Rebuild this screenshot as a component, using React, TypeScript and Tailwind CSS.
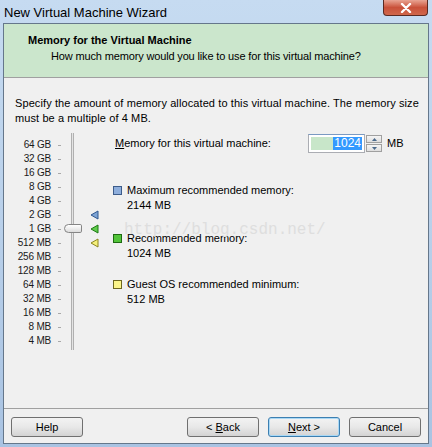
import React from "react";

const sizes = [
  "64 GB",
  "32 GB",
  "16 GB",
  "8 GB",
  "4 GB",
  "2 GB",
  "1 GB",
  "512 MB",
  "256 MB",
  "128 MB",
  "64 MB",
  "32 MB",
  "16 MB",
  "8 MB",
  "4 MB",
];

const Arrow = ({ fill, stroke }: { fill: string; stroke: string }) => (
  <svg width="9" height="10" viewBox="0 0 9 10">
    <path d="M8 1 L1 5 L8 9 Z" fill={fill} stroke={stroke} strokeWidth="1" />
  </svg>
);

const Swatch = ({ color, border }: { color: string; border: string }) => (
  <span
    className="inline-block w-[9px] h-[9px] border mt-[3px] shrink-0"
    style={{ backgroundColor: color, borderColor: border }}
  />
);

const WinButton = ({
  children,
  focused,
}: {
  children: React.ReactNode;
  focused?: boolean;
}) => (
  <button
    className={`w-[72px] h-[20px] rounded-[3px] border text-[11px] text-black bg-gradient-to-b from-[#f3f3f3] via-[#e8e8e8] to-[#d3d3d3] ${
      focused ? "border-[#3c7fb1] shadow-[inset_0_0_0_1px_#a9d8f5]" : "border-[#707070]"
    }`}
  >
    {children}
  </button>
);

export default function App() {
  return (
    <div
      className="w-[432px] h-[447px] flex flex-col bg-gradient-to-b from-[#c6dbf1] via-[#b9d0ea] to-[#a9c3e2]"
      style={{ fontFamily: '"Liberation Sans", Arial, sans-serif' }}
    >
      {/* title bar */}
      <div className="h-[23px] flex items-start justify-between shrink-0">
        <span className="text-[13px] text-black pl-[4px] pt-[5px] leading-[16px]">
          New Virtual Machine Wizard
        </span>
        <div className="mr-[4px] w-[45px] h-[16px] rounded-b-[4px] border border-t-0 border-[#5a2a22] bg-gradient-to-b from-[#e8a493] via-[#c9513a] to-[#d0674b] flex items-center justify-center">
          <svg width="12" height="10" viewBox="0 0 12 10">
            <path
              d="M2 1 L10 9 M10 1 L2 9"
              stroke="#ffffff"
              strokeWidth="2.4"
              strokeLinecap="round"
            />
          </svg>
        </div>
      </div>

      {/* client */}
      <div className="flex-1 ml-[3px] mr-[3px] mb-[3px] border border-[#65778b] bg-[#f0f0f0] flex flex-col">
        {/* header */}
        <div className="h-[54px] bg-[#cbe6cc] border-b border-[#a0a0a0] shrink-0 pt-[9px]">
          <div className="pl-[24px] text-[11px] font-bold text-black leading-[14px]">
            Memory for the Virtual Machine
          </div>
          <div className="pl-[47px] mt-[2px] text-[11px] text-black leading-[14px] tracking-[-0.15px]">
            How much memory would you like to use for this virtual machine?
          </div>
        </div>

        {/* body */}
        <div className="flex-1 relative">
          <p className="pl-[11px] pr-[6px] pt-[18px] text-[11px] leading-[15px] text-black tracking-[0.1px]">
            Specify the amount of memory allocated to this virtual machine. The memory size must be
            a multiple of 4 MB.
          </p>

          <div className="flex mt-[12px]">
            {/* slider labels */}
            <div className="w-[47px] flex flex-col items-end">
              {sizes.map((s) => (
                <div key={s} className="h-[14px] text-[10px] leading-[14px] text-[#1a1a1a] tracking-[-0.2px]">
                  {s}
                </div>
              ))}
            </div>
            <div className="w-[10px] flex flex-col items-end">
              {sizes.map((s) => (
                <div key={s} className="h-[14px] flex items-center">
                  <div className="w-[3px] h-px bg-[#a8a8a8]" />
                </div>
              ))}
            </div>
            {/* track */}
            <div className="w-[29px] relative">
              <div className="absolute left-[10px] -top-[5px] h-[217px] w-[3px] border-x border-[#b0b0b0] bg-[#e4e4e4]" />
              <div className="absolute left-[3px] top-[86px] w-[18px] h-[9px] rounded-l-[5px] rounded-r-[2px] border border-[#858585] bg-gradient-to-b from-[#ffffff] to-[#dcdcdc]" />
            </div>
            {/* arrows */}
            <div className="w-[25px] flex flex-col">
              <div className="h-[70px]" />
              <div className="h-[14px] flex items-center">
                <Arrow fill="#7ea4d4" stroke="#2f5890" />
              </div>
              <div className="h-[14px] flex items-center">
                <Arrow fill="#5fcb4b" stroke="#1d7a14" />
              </div>
              <div className="h-[14px] flex items-center">
                <Arrow fill="#f5f07a" stroke="#8a8420" />
              </div>
            </div>

            {/* right side */}
            <div className="flex-1 flex flex-col text-[11px] text-black leading-[15px]">
              <div className="flex items-center -mt-[4px]">
                <span className="w-[193px]">
                  <span className="underline">M</span>emory for this virtual machine:
                </span>
                <div className="flex items-center">
                  <div className="w-[57px] h-[19px] border border-[#abadb3] border-t-[#7a9ac2] bg-white p-[2px] flex">
                    <div className="flex-1 bg-[#c8e6c9]" />
                    <div className="bg-[#3399ff] text-white text-[12px] leading-[13px] px-[1px]">
                      1024
                    </div>
                  </div>
                  <div className="flex flex-col ml-[1px] gap-px">
                    <div className="w-[16px] h-[8px] border border-[#a0a0a0] bg-gradient-to-b from-[#f5f5f5] to-[#dedede] flex items-center justify-center">
                      <svg width="5" height="3" viewBox="0 0 5 3">
                        <path d="M0 3 L2.5 0 L5 3 Z" fill="#4b6a8c" />
                      </svg>
                    </div>
                    <div className="w-[16px] h-[8px] border border-[#a0a0a0] bg-gradient-to-b from-[#f5f5f5] to-[#dedede] flex items-center justify-center">
                      <svg width="5" height="3" viewBox="0 0 5 3">
                        <path d="M0 0 L2.5 3 L5 0 Z" fill="#4b6a8c" />
                      </svg>
                    </div>
                  </div>
                  <span className="ml-[5px]">MB</span>
                </div>
              </div>

              <div className="flex gap-[5px] mt-[30px] -ml-[2px]">
                <Swatch color="#8eaedc" border="#3d5c8a" />
                <div>
                  <div>Maximum recommended memory:</div>
                  <div>2144 MB</div>
                </div>
              </div>

              <div className="flex gap-[5px] mt-[18px] -ml-[2px]">
                <Swatch color="#52c43a" border="#1e6b12" />
                <div>
                  <div>Recommended memory:</div>
                  <div>1024 MB</div>
                </div>
              </div>

              <div className="flex gap-[5px] mt-[16px] -ml-[2px]">
                <Swatch color="#fbf58a" border="#6d6820" />
                <div>
                  <div>Guest OS recommended minimum:</div>
                  <div>512 MB</div>
                </div>
              </div>
            </div>
          </div>

          {/* watermark */}
          <div
            className="absolute left-[120px] top-[140px] text-[16px] text-[#dedede] pointer-events-none"
            style={{ fontFamily: '"Liberation Mono", "Courier New", monospace' }}
          >
            http://blog.csdn.net/
          </div>
        </div>

        {/* footer */}
        <div className="h-[35px] border-t border-[#a0a0a0] shrink-0 flex items-start pt-[8px] px-[7px]">
          <WinButton>Help</WinButton>
          <div className="flex-1" />
          <div className="flex gap-[9px]">
            <WinButton>
              &lt; <span className="underline">B</span>ack
            </WinButton>
            <WinButton focused>
              <span className="underline">N</span>ext &gt;
            </WinButton>
            <WinButton>Cancel</WinButton>
          </div>
        </div>
      </div>
    </div>
  );
}
